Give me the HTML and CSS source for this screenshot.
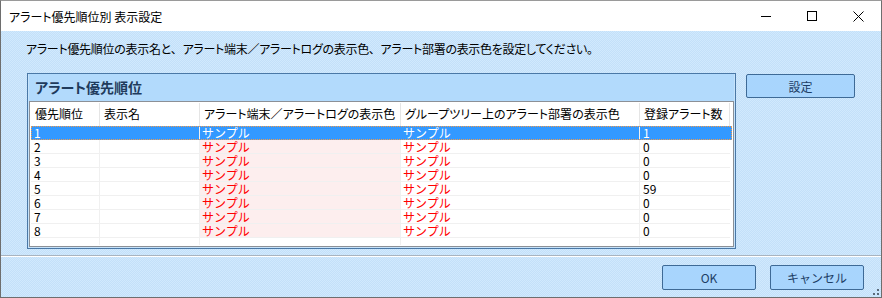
FILE: index.html
```html
<!DOCTYPE html>
<html lang="ja">
<head>
    <meta charset="UTF-8">
    <title>アラート優先順位別 表示設定</title>
    <link rel="stylesheet" href="styles.css">
</head>
<body>

<div class="window">
    <div class="titlebar">
        <div class="title">アラート優先順位別 表示設定</div>
        <div class="caption-buttons">
            <div class="caption-btn">
                <svg width="10" height="10" viewBox="0 0 10 10"><line x1="0" y1="5.5" x2="10" y2="5.5" stroke="#000" stroke-width="1"/></svg>
            </div>
            <div class="caption-btn">
                <svg width="10" height="10" viewBox="0 0 10 10"><rect x="0.5" y="0.5" width="9" height="9" fill="none" stroke="#000" stroke-width="1"/></svg>
            </div>
            <div class="caption-btn">
                <svg width="11" height="11" viewBox="0 0 11 11"><path d="M0.5 0.5 L10.5 10.5 M10.5 0.5 L0.5 10.5" stroke="#000" stroke-width="1" fill="none"/></svg>
            </div>
        </div>
    </div>

    <div class="client">
        <div class="desc">アラート優先順位の表示名と<span class="comma">、</span>アラート端末／アラートログの表示色<span class="comma">、</span>アラート部署の表示色を設定してください。</div>

        <div class="main">
            <div class="groupbox">
                <div class="group-title">アラート優先順位</div>
                <div class="list">
                    <div class="row head">
                        <div class="cell c1">優先順位</div>
                        <div class="cell c2">表示名</div>
                        <div class="cell c3">アラート端末／アラートログの表示色</div>
                        <div class="cell c4">グループツリー上のアラート部署の表示色</div>
                        <div class="cell c5">登録アラート数</div>
                    </div>
                    <div class="row selected">
                        <div class="cell c1">1</div>
                        <div class="cell c2"></div>
                        <div class="cell c3">サンプル</div>
                        <div class="cell c4">サンプル</div>
                        <div class="cell c5">1</div>
                    </div>
                    <div class="row">
                        <div class="cell c1">2</div>
                        <div class="cell c2"></div>
                        <div class="cell c3 sample">サンプル</div>
                        <div class="cell c4 sample">サンプル</div>
                        <div class="cell c5">0</div>
                    </div>
                    <div class="row">
                        <div class="cell c1">3</div>
                        <div class="cell c2"></div>
                        <div class="cell c3 sample">サンプル</div>
                        <div class="cell c4 sample">サンプル</div>
                        <div class="cell c5">0</div>
                    </div>
                    <div class="row">
                        <div class="cell c1">4</div>
                        <div class="cell c2"></div>
                        <div class="cell c3 sample">サンプル</div>
                        <div class="cell c4 sample">サンプル</div>
                        <div class="cell c5">0</div>
                    </div>
                    <div class="row">
                        <div class="cell c1">5</div>
                        <div class="cell c2"></div>
                        <div class="cell c3 sample">サンプル</div>
                        <div class="cell c4 sample">サンプル</div>
                        <div class="cell c5">59</div>
                    </div>
                    <div class="row">
                        <div class="cell c1">6</div>
                        <div class="cell c2"></div>
                        <div class="cell c3 sample">サンプル</div>
                        <div class="cell c4 sample">サンプル</div>
                        <div class="cell c5">0</div>
                    </div>
                    <div class="row">
                        <div class="cell c1">7</div>
                        <div class="cell c2"></div>
                        <div class="cell c3 sample">サンプル</div>
                        <div class="cell c4 sample">サンプル</div>
                        <div class="cell c5">0</div>
                    </div>
                    <div class="row">
                        <div class="cell c1">8</div>
                        <div class="cell c2"></div>
                        <div class="cell c3 sample">サンプル</div>
                        <div class="cell c4 sample">サンプル</div>
                        <div class="cell c5">0</div>
                    </div>
                    <div class="row filler">
                        <div class="cell c1"></div>
                        <div class="cell c2"></div>
                        <div class="cell c3"></div>
                        <div class="cell c4"></div>
                        <div class="cell c5"></div>
                    </div>
                </div>
            </div>
            <button class="button set">設定</button>
        </div>

        <div class="separator"></div>

        <div class="footer">
            <button class="button">OK</button>
            <button class="button">キャンセル</button>
        </div>

        <svg class="grip" width="6" height="6" viewBox="0 0 6 6">
            <rect x="4" y="0" width="2" height="2" fill="#5a6a7a"/>
            <rect x="0" y="4" width="2" height="2" fill="#5a6a7a"/>
            <rect x="4" y="4" width="2" height="2" fill="#5a6a7a"/>
        </svg>
    </div>
</div>

</body>
</html>
```

FILE: styles.css
```css
* {
    box-sizing: border-box;
    font-family: "Noto Sans CJK JP", "Noto Sans", sans-serif;
}

body {
    margin: 0;
    background: #fff;
    font-size: 12px;
    color: #000;
}

.window {
    width: 882px;
    height: 298px;
    border: 1px solid #6e6e6e;
    border-top-color: #9a9a9a;
    display: flex;
    flex-direction: column;
    background: #fff;
}

.titlebar {
    flex: none;
    height: 30px;
    display: flex;
    align-items: center;
    justify-content: space-between;
    background: #fff;
}

.title {
    padding-left: 8px;
    font-size: 12px;
    font-feature-settings: "palt";
    color: #000;
}

.caption-buttons {
    display: flex;
    height: 100%;
}

.caption-btn {
    width: 46px;
    height: 30px;
    display: flex;
    align-items: center;
    justify-content: center;
}

.client {
    flex: 1;
    position: relative;
    display: flex;
    flex-direction: column;
    background: repeating-conic-gradient(#c3e0f9 0 25%, #d1e9fd 0 50%) 0 0 / 2px 2px;
}

.desc {
    margin-top: 10px;
    padding-left: 25px;
    line-height: 16px;
    letter-spacing: -0.3px;
    font-feature-settings: "palt";
}

.desc .comma {
    font-feature-settings: normal;
}

.main {
    display: flex;
    align-items: flex-start;
    gap: 10px;
    margin-top: 16px;
    padding-left: 26px;
}

.groupbox {
    width: 709px;
    height: 176px;
    border: 1px solid #4a78a6;
    padding: 0 1px 1px;
    display: flex;
    flex-direction: column;
    background: #c6e3fb;
}

.group-title {
    flex: none;
    height: 27px;
    line-height: 27px;
    padding-left: 6px;
    background: #b2dafc;
    font-size: 14px;
    font-weight: bold;
    font-feature-settings: "palt";
    color: #1f3b5c;
}

.list {
    flex: 1;
    border: 1px solid #8c9096;
    padding: 1px;
    background: #fff;
    overflow: hidden;
}

.row {
    display: flex;
    height: 14px;
}

.cell {
    height: 100%;
    padding-left: 3px;
    line-height: 13px;
    white-space: nowrap;
    border-right: 1px solid #f0f0f0;
    border-bottom: 1px solid #f0f0f0;
}

.c1 { width: 69px; }
.c2 { width: 100px; }
.c3 { width: 201px; padding-left: 2px; }
.c4 { width: 239px; padding-left: 2px; }
.c5 { width: 90px; border-right: none; }

.row.head {
    height: 23px;
}

.row.head .cell {
    line-height: 22px;
    padding-left: 4px;
    border-right-color: #e5e5e5;
    border-bottom: none;
    font-feature-settings: "palt";
}

.row.head .c5 {
    border-right: 1px solid #e5e5e5;
}

.row .c3 {
    background: #fdeeee;
}

.row.head .c3,
.row.filler .c3 {
    background: #fff;
}

.sample {
    color: #ff0000;
}

.row.selected {
    background: #3399ff;
    color: #fff;
    outline: 1px dotted #f39a4a;
    outline-offset: -1px;
}

.row.selected .cell {
    border-bottom-color: #3399ff;
    border-right-color: #3399ff;
}

.row.selected .c2,
.row.selected .c4 {
    border-right-color: #f0f0f0;
}

.row.selected .c3 {
    background: transparent;
}

.row.filler {
    height: 7px;
}

.row.filler .cell {
    border-bottom: none;
}

.button {
    font-size: 12px;
    color: #1d3e66;
    background: #a8d5fd;
    border: 1px solid #3e6a96;
    border-radius: 2px;
    padding: 0;
}

.set {
    width: 109px;
    height: 24px;
    margin-top: 1px;
}

.separator {
    margin-top: 6px;
    height: 2px;
    border-top: 1px solid #a9b4bf;
    border-bottom: 1px solid #ffffff;
}

.footer {
    display: flex;
    justify-content: flex-end;
    gap: 14px;
    margin-top: 8px;
    padding-right: 17px;
}

.footer .button {
    width: 94px;
    height: 25px;
}

.grip {
    position: absolute;
    right: 2px;
    bottom: 2px;
}
```
